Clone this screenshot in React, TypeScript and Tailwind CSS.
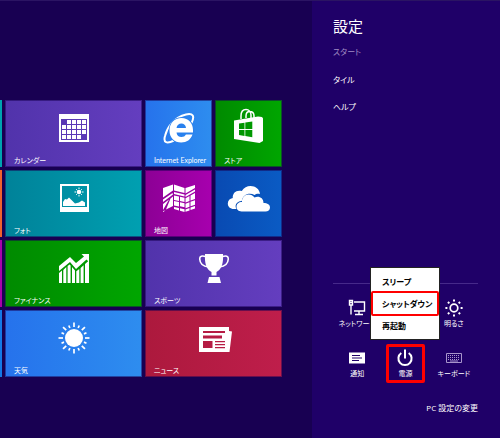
import type { ReactNode } from 'react';

type TileProps = { label?: string; name?: string; tone: string; wide?: boolean; children: ReactNode };

function Tile({ label, name, tone, wide, children }: TileProps) {
  return (
    <button
      type="button"
      aria-label={label ? undefined : name}
      className={`flex h-[67px] flex-col border border-[#180052]/50 bg-linear-to-r bg-origin-border text-left ${wide ? 'col-span-2' : ''} ${tone}`}
    >
      <span className="flex h-[54px] w-full items-center justify-center">{children}</span>
      <span className="block w-full pl-2 font-[Lato,'Noto_Sans_CJK_JP',sans-serif] text-[7px] leading-[10px] whitespace-nowrap">{label}</span>
    </button>
  );
}

const icon = 'h-8 w-11 fill-white';

/* Every tile icon is drawn on a 44 x 32 board. */
function CalendarIcon() {
  const cells: ReactNode[] = [];
  for (let r = 0; r < 4; r++)
    for (let c = 0; c < 5; c++)
      if (!(r === 0 && c === 0) && !(r === 3 && c === 4))
        cells.push(<rect key={`${r}-${c}`} x={10 + c * 5} y={8 + r * 5} width="4" height="4" />);
  return (
    <svg viewBox="0 0 44 32" className={icon}>
      <path fillRule="evenodd" d="M7 2h30v28H7zM9 7v21h26V7z" />
      {cells}
    </svg>
  );
}

function ExplorerIcon() {
  return (
    <svg viewBox="0 0 44 32" className={icon}>
      <path d="M17 28.500C10 32 6 31 8 24C10 16 17 5 29 2.500C36 1 38 4 34.500 11" className="fill-none stroke-white stroke-2" />
      <path
        fillRule="evenodd"
        d="M24.500 6C31.500 6 36 11 36 18v2.500H19.500c.3 3 2.300 4.500 5 4.500 2 0 3.600-.8 4.400-2.500H35.500c-1.600 5-5.800 8-11.300 8C17.500 30.500 12.500 26 12.500 18.500S17.500 6 24.500 6zM19.500 16h9.500c-.2-2.800-2.100-4.500-4.600-4.500s-4.500 1.700-4.900 4.500z"
        className="stroke-[#2a80ee] stroke-[1.600] [paint-order:stroke]"
      />
    </svg>
  );
}

function StoreIcon() {
  return (
    <svg viewBox="0 0 44 36" className="-mt-1 h-9 w-11 fill-white">
      <path d="M14 11V8c0-4 2-6.500 5-6.500S24 4 24 7v3M19 10V8c0-3 1.500-4.500 3.700-4.500S27 5 27 8v2" className="fill-none stroke-white stroke-[1.5]" />
      <path fillRule="evenodd" d="M7 12.500L31 8.500q5 0 5 2V33l-3.500 2L7 31zM12 15.500V27l5.500 1V14.700zM18.300 14.600V28.100l7 1.200V13.500z" />
      <path d="M12 21.500h14" className="stroke-white stroke-1" />
    </svg>
  );
}

function PhotoIcon() {
  return (
    <svg viewBox="0 0 44 32" className={icon}>
      <path fillRule="evenodd" d="M8 2h29v28H8zM10 4v21h25V4z" />
      <path d="M11 24v-4l2-3 2 .5 2-2 3 3 3 3 4-1 3-2 3 2v3.500z" />
      <circle cx="27" cy="10" r="2.300" />
      <path d="M27 5.500v1.500M27 13v1.500M22.500 10H24M30 10h1.500M24 7l.8.800M30 7l-.8.800M24 13l.8-.8M30 13l-.8-.8" className="stroke-white" />
    </svg>
  );
}

function MapIcon() {
  return (
    <svg viewBox="0 0 44 32" className={icon}>
      <path d="M6 6l10-3.500v6L6 15.500zM17 2.500l10.500 3.500v5L17 8.500zM28.500 6L38 3v3l-9.500 5.500zM6 17.500L15.500 11l.5 1.500L6 20zM6 22l6-4.500L6 28zM13.500 16.500L16 14.500V24l-7 3.500zM8.500 28.500L6 30v-1zM17 10l10.500 2.500v2L17 12zM17 13.500l5 1v4.500l-5-1zM23 14.800l4.500 1V20L23 19zM17 19l5 1v4.500l-5-1zM23 20.300l4.500 1v4l-4.500-1zM17 25l5 1v2.500L17 27zM23 26.300l4.500 1V30L23 28.800zM28.500 13l9.500-5.500v2l-9.500 5.500zM28.500 16.300l4-2.300v5l-4 1.500zM33.500 13.400L38 11v6l-4.500 1.600zM28.500 21.700l4-1.500v4.500l-4 1.500zM33.500 19.800l4.500-1.600v4.500l-4.500 1.600zM28.500 27.500l4-1.500v2.500l-4 1.300zM33.500 25.600L38 24v2.500L33.500 28z" />
    </svg>
  );
}

function CloudIcon() {
  return (
    <svg viewBox="0 0 44 32" className="mt-1 h-8 w-11 fill-white">
      <path d="M7 25C3 25 .8 22.500.8 19.500c0-3 2-5 5-5.500-.5-5 3.500-8.500 9-7C17 3.500 20 2 23.500 2c5 0 9 3 9.500 8-2.500-.7-4 0-5.500 1-5-3-12-.5-12.700 6-6 .5-7.300 5-5.300 8z" />
      <path d="M14.500 27.500c-3 0-5-2-5-4.700s2-4.800 5.500-4.800c-.5-4 3-7.500 6.500-7.500 2.500 0 4.500 1 6 3 4-2 9 0 9 5.500 4 0 6.500 1.500 6.500 4.500 0 2.500-2 4-4.500 4z" />
    </svg>
  );
}

function FinanceIcon() {
  return (
    <svg viewBox="0 0 44 32" className={icon}>
      <path d="M7 14L18 5l6 6 8-6.500L29.500 2H37v8l-2.500-2.500L24 17l-6-7L7 19z" />
      <path d="M7 21l3-2.500V31H7zM11.300 18l3-3v16h-3zM15.600 14l2-1.500 1 1V31h-3zM20 15l3 3.500V31h-3zM24.300 19.300l3-2.300v14h-3zM28.600 16l3-2.700V31h-3zM33 12l4-3.500V31h-4z" />
    </svg>
  );
}

function TrophyIcon() {
  return (
    <svg viewBox="0 0 44 32" className={icon}>
      <path d="M13 2h18c.5 9-1 15-6.500 18v3.500h-5V20C14 17 12.500 11 13 2zM17 25h10.500l1.500 6H15.500z" />
      <path d="M13.500 4.500C10 3.500 7.500 4 7.700 7c.3 5 4 7.500 8.800 8M30.500 4.500C34 3.500 36.500 4 36.300 7c-.3 5-4 7.500-8.800 8" className="fill-none stroke-white stroke-[1.600]" />
    </svg>
  );
}

function WeatherIcon() {
  const rays = Array.from({ length: 16 }, (_, i) => i);
  return (
    <svg viewBox="0 0 44 32" className={icon}>
      <circle cx="22" cy="16" r="9" />
      {rays.map((i) => (
        <path key={i} d={i % 2 ? 'M22 5.200V2.500' : 'M22 5V0.500'} transform={`rotate(${i * 22.5} 22 16)`} className="stroke-white stroke-[1.700]" />
      ))}
    </svg>
  );
}

function NewsIcon() {
  return (
    <svg viewBox="0 0 44 32" className={icon}>
      <path fillRule="evenodd" d="M7 5h30v4l3 .5-2.500 20.500H7zM11 9v2h22V9zM11 13.500v3h19v-3zM11 19v7h9.500v-7zM23 19v1.200h10V19zM23 22v1.200h10V22zM23 25v1.200h10V25z" />
    </svg>
  );
}

function NetworkIcon() {
  return (
    <svg viewBox="0 0 18 18" className="size-[18px] fill-none stroke-white stroke-[1.400]">
      <path d="M6 3h10.500v9H6M11 12v3M7 15.500h8M3 6v9.500M1.500 1.500h3V6h-3zM1 3.500h4" />
    </svg>
  );
}

function BrightnessIcon() {
  return (
    <svg viewBox="0 0 18 18" className="size-[18px] fill-none stroke-white stroke-2">
      <circle cx="9" cy="9" r="3.800" className="stroke-[1.700]" />
      {[0, 45, 90, 135, 180, 225, 270, 315].map((a) => (
        <path key={a} d="M9 0.400V2.400" transform={`rotate(${a} 9 9)`} />
      ))}
    </svg>
  );
}

function NoticeIcon() {
  return (
    <svg viewBox="0 0 18 18" className="size-[18px] fill-white">
      <path fillRule="evenodd" d="M1 3.500h16v11H1zM4 6v1h8V6zM4 8.500v1h10v-1zM4 11v1h7v-1z" />
    </svg>
  );
}

function PowerIcon() {
  return (
    <svg viewBox="0 0 18 18" className="size-[18px] fill-none stroke-white stroke-2">
      <path d="M9 0.500v9M5.300 4a6.600 6.600 0 1 0 7.400 0" />
    </svg>
  );
}

function KeyboardIcon() {
  return (
    <svg viewBox="0 0 18 18" className="size-[18px] fill-none stroke-[#a794cb]">
      <path d="M1.500 4.500h15v9h-15z" />
      <path d="M3 6.500h12M3 8.500h12M3 10.500h12" strokeDasharray="1 1" />
      <path d="M5 12h8" />
    </svg>
  );
}

function Control({ label, children }: { label: string; children: ReactNode }) {
  return (
    <button type="button" className="flex flex-col items-center text-[7px] leading-[14px] whitespace-nowrap">
      {children}
      <span>{label}</span>
    </button>
  );
}

export default function App() {
  return (
    <div
      lang="ja"
      className="flex min-h-screen overflow-hidden border-t border-[#2b1463] bg-[#180052] font-['Open_Sans','Noto_Sans_CJK_JP',sans-serif] text-white [font-feature-settings:'palt']"
    >
      <main className="min-w-0 flex-1 overflow-hidden pt-[99px]">
        <div className="flex gap-[3px]">
          <div className="flex w-[2px] shrink-0 flex-col gap-[3px]">
            <div className="h-[67px] bg-[#00a3b0]" />
            <div className="h-[67px] bg-[#f0622d]" />
            <div className="h-[67px] bg-[#a800a8]" />
            <div className="h-[67px] bg-[#1478e6]" />
          </div>
          <div className="grid grid-cols-[67px_67px_67px_67px] gap-[3px]">
            <Tile wide label="カレンダー" tone="from-[#5133ab] to-[#643ebf]"><CalendarIcon /></Tile>
            <Tile label="Internet Explorer" tone="from-[#2672ec] to-[#2e8def]"><ExplorerIcon /></Tile>
            <Tile label="ストア" tone="from-[#008a00] to-[#00a600]"><StoreIcon /></Tile>
            <Tile wide label="フォト" tone="from-[#008299] to-[#00a0b1]"><PhotoIcon /></Tile>
            <Tile label="地図" tone="from-[#8c0095] to-[#a700ae]"><MapIcon /></Tile>
            <Tile name="SkyDrive" tone="from-[#094ab2] to-[#0a5bc4]"><CloudIcon /></Tile>
            <Tile wide label="ファイナンス" tone="from-[#008a00] to-[#00a600]"><FinanceIcon /></Tile>
            <Tile wide label="スポーツ" tone="from-[#5133ab] to-[#643ebf]"><TrophyIcon /></Tile>
            <Tile wide label="天気" tone="from-[#2672ec] to-[#2e8def]"><WeatherIcon /></Tile>
            <Tile wide label="ニュース" tone="from-[#ac193d] to-[#bf1e4b]"><NewsIcon /></Tile>
          </div>
        </div>
      </main>

      <aside className="flex w-[188px] shrink-0 flex-col bg-[#1f0068] pr-[22px] pb-[22px] pl-[21px]">
        <h1 className="pt-[13px] text-[15px] leading-[24px]">設定</h1>
        <p className="pt-[7px] text-[8px] leading-[14px] text-[#a08cc4]">スタート</p>
        <nav className="flex flex-col items-start gap-[14px] pt-[14px] text-[8px] leading-[13px]">
          <a href="#tile">タイル</a>
          <a href="#help">ヘルプ</a>
        </nav>

        <div className="relative mt-auto border-t border-[#46298a] pt-[15px]">
          <div className="grid grid-cols-3 gap-y-[18px]">
            <Control label="ネットワーク"><NetworkIcon /></Control>
            <span />
            <Control label="明るさ"><BrightnessIcon /></Control>
            <Control label="通知"><NoticeIcon /></Control>
            <Control label="電源"><PowerIcon /></Control>
            <Control label="キーボード"><KeyboardIcon /></Control>
          </div>
          <div className="pointer-events-none absolute top-[60px] left-[53px] size-[39px] rounded-[2px] border-3 border-[#ff0000]" />
          <div
            role="menu"
            className="absolute -top-[17px] left-[37px] flex w-[70px] flex-col border border-[#222222] bg-white text-[8px] font-bold text-black"
          >
            <button type="button" role="menuitem" className="h-[23px] pt-[4px] pl-[11px] text-left">スリープ</button>
            <button type="button" role="menuitem" className="h-[25px] rounded-[2px] border-2 border-[#ff0000] pl-[9px] text-left whitespace-nowrap">シャットダウン</button>
            <button type="button" role="menuitem" className="h-[23px] pb-[4px] pl-[11px] text-left">再起動</button>
          </div>
        </div>

        <a href="#settings" className="mt-[19px] self-end text-[8px] leading-[16px]">PC 設定の変更</a>
      </aside>
    </div>
  );
}
